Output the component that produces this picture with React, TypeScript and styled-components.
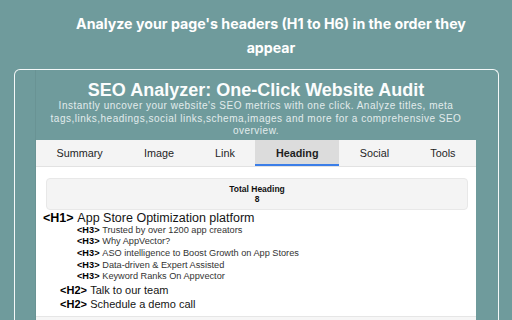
import styled, { createGlobalStyle } from "styled-components";

const tabs = ["Summary", "Image", "Link", "Heading", "Social", "Tools"];

const headings = [
  { level: 1, text: "App Store Optimization platform" },
  { level: 3, text: "Trusted by over 1200 app creators" },
  { level: 3, text: "Why AppVector?" },
  { level: 3, text: "ASO intelligence to Boost Growth on App Stores" },
  { level: 3, text: "Data-driven & Expert Assisted" },
  { level: 3, text: "Keyword Ranks On Appvector" },
  { level: 2, text: "Talk to our team" },
  { level: 2, text: "Schedule a demo call" },
];

const sizes: Record<number, { font: number; line: number }> = {
  1: { font: 12.5, line: 14 },
  2: { font: 11, line: 14 },
  3: { font: 9.2, line: 11.7 },
};

const GlobalStyle = createGlobalStyle`
  html, body {
    margin: 0;
    padding: 0;
    background: #6f9b9c;
    overflow: hidden;
  }
`;

const Page = styled.div`
  width: 512px;
  height: 320px;
  overflow: hidden;
  display: flex;
  flex-direction: column;
  background: #6f9b9c;
`;

const Headline = styled.h1`
  width: 420px;
  margin: 12px 0 0 61px;
  font-family: Inter, "Liberation Sans", sans-serif;
  font-weight: 700;
  font-size: 14.2px;
  line-height: 24px;
  color: #ffffff;
  text-align: center;
`;

const Frame = styled.div`
  flex: 1;
  margin: 9px 13px 0 14px;
  border: 1.5px solid #f4f8f8;
  border-bottom: none;
  border-radius: 6px 6px 0 0;
  padding: 0 22px 0 20px;
  display: flex;
  min-height: 0;
`;

const Panel = styled.div`
  flex: 1;
  display: flex;
  flex-direction: column;
  border-left: 1px solid rgba(0, 0, 0, 0.05);
  font-family: "Liberation Sans", Arial, sans-serif;
`;

const Title = styled.h2`
  margin: 10px 0 0;
  font-size: 18px;
  line-height: 20px;
  font-weight: 700;
  color: #fbfdfd;
  text-align: center;
`;

const Subtitle = styled.p`
  margin: 0;
  padding: 0 4px;
  font-size: 10px;
  line-height: 12.5px;
  letter-spacing: 0.5px;
  color: #e2ecec;
  text-align: center;
`;

const TabBar = styled.div`
  display: flex;
  margin-top: 2px;
  height: 26px;
  background: #f4f4f4;
  border-bottom: 1px solid #e2e2e2;
`;

const Tab = styled.div<{ $active?: boolean }>`
  flex: 1 1 auto;
  display: flex;
  align-items: center;
  justify-content: center;
  font-size: 10.8px;
  font-weight: ${({ $active }) => ($active ? 700 : 400)};
  color: #1f1f1f;
  background: ${({ $active }) => ($active ? "#dcdcdc" : "transparent")};
  box-shadow: ${({ $active }) => ($active ? "inset 0 -2px 0 #3b7ee8" : "none")};
`;

const Content = styled.div`
  flex: 1;
  background: #ffffff;
  padding: 11px 8px 0 7px;
  display: flex;
  flex-direction: column;
`;

const TotalBox = styled.div`
  margin-left: 3px;
  padding: 5px 0;
  background: #f4f4f4;
  border: 1px solid #e8e8e8;
  border-radius: 4px;
  text-align: center;
  font-size: 8.5px;
  line-height: 10px;
  font-weight: 700;
  color: #111;
`;

const HeadingList = styled.div`
  display: flex;
  flex-direction: column;
  padding-top: 1px;
`;

const HeadingRow = styled.div<{ $level: number }>`
  padding-left: ${({ $level }) => ($level - 1) * 17}px;
  font-size: ${({ $level }) => sizes[$level].font}px;
  line-height: ${({ $level }) => sizes[$level].line}px;
  color: ${({ $level }) => ($level === 3 ? "#333" : "#151515")};
  white-space: nowrap;
`;

const Tag = styled.b`
  color: #000;
  margin-right: 0.3em;
`;

const Footer = styled.div`
  flex: 1;
  margin-top: 5px;
  border-top: 1px solid #e6e6e6;
  background: #f6f6f6;
  margin-left: -7px;
  margin-right: -8px;
`;

export default function App() {
  return (
    <Page>
      <GlobalStyle />
      <Headline>Analyze your page's headers (H1 to H6) in the order they appear</Headline>
      <Frame>
        <Panel>
          <Title>SEO Analyzer: One-Click Website Audit</Title>
          <Subtitle>
            Instantly uncover your website's SEO metrics with one click. Analyze titles, meta
            tags,links,headings,social links,schema,images and more for a comprehensive SEO
            overview.
          </Subtitle>
          <TabBar>
            {tabs.map((t) => (
              <Tab key={t} $active={t === "Heading"}>
                {t}
              </Tab>
            ))}
          </TabBar>
          <Content>
            <TotalBox>
              <div>Total Heading</div>
              <div>{headings.length}</div>
            </TotalBox>
            <HeadingList>
              {headings.map((h, i) => (
                <HeadingRow key={i} $level={h.level}>
                  <Tag>&lt;H{h.level}&gt;</Tag>
                  {h.text}
                </HeadingRow>
              ))}
            </HeadingList>
            <Footer />
          </Content>
        </Panel>
      </Frame>
    </Page>
  );
}
